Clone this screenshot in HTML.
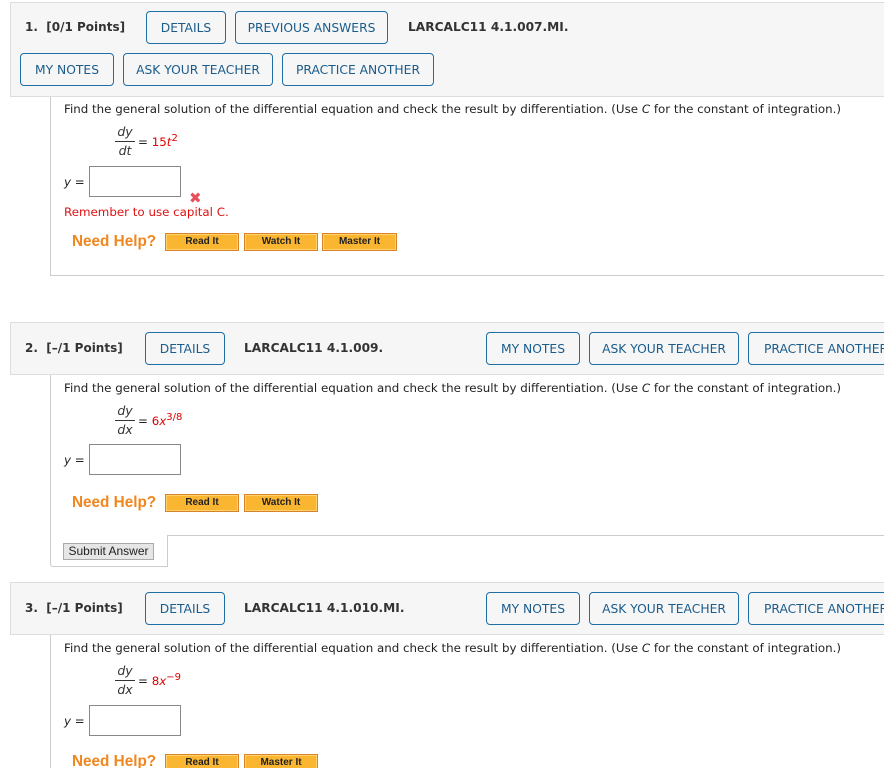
<!DOCTYPE html>
<html><head><style>
html,body{margin:0;width:884px;height:768px;overflow:hidden}
body{background:#fff;font-family:"DejaVu Sans","Liberation Sans",sans-serif;position:relative}
.a{position:absolute;white-space:nowrap}
.hdr{position:absolute;left:10px;width:874px;background:#f6f6f6;border:1px solid #ddd;border-right:none;box-sizing:border-box}
.btn{position:absolute;border:1px solid #1e6fa5;border-radius:4px;color:#1a5c8c;font-size:12.3px;display:flex;align-items:center;justify-content:center;box-sizing:border-box;height:33px;background:#f6f6f6;white-space:nowrap;overflow:hidden}
.pts{font-size:12px;font-weight:bold;color:#333}
.code{font-size:12.2px;font-weight:bold;color:#333}
.txt{font-size:11.85px;color:#222}
.frac{position:absolute;font-size:12.5px;font-style:italic;color:#333;text-align:center;width:20px}
.red{color:#d00}
.inp{position:absolute;width:92px;height:31px;border:1px solid #888;box-sizing:border-box;background:#fff}
.nh{font-family:"Liberation Sans",sans-serif;font-size:15.3px;font-weight:bold;color:#f0861e}
.hb{position:absolute;height:18px;background:#fbb631;border:1px solid #d9822b;box-shadow:inset 0 0 0 1px #ffd36b;box-sizing:border-box;font-family:"Liberation Sans",sans-serif;font-size:10px;font-weight:bold;color:#222;text-align:center;line-height:16px}
.box{position:absolute;border-left:1px solid #ccc;border-bottom:1px solid #ccc;box-sizing:border-box}
sup{font-size:10px}
</style></head><body>

<!-- Q1 -->
<div class="box" style="left:50px;top:96px;width:834px;height:180px"></div>
<div class="hdr" style="top:2px;height:95px"></div>
<div class="a pts" style="left:25px;top:20px">1.&nbsp; [0/1 Points]</div>
<div class="btn" style="left:146px;top:11px;width:80px">DETAILS</div>
<div class="btn" style="left:235px;top:11px;width:153px">PREVIOUS ANSWERS</div>
<div class="a code" style="left:408px;top:20px">LARCALC11 4.1.007.MI.</div>
<div class="btn" style="left:20px;top:53px;width:94px">MY NOTES</div>
<div class="btn" style="left:123px;top:53px;width:150px">ASK YOUR TEACHER</div>
<div class="btn" style="left:282px;top:53px;width:152px">PRACTICE ANOTHER</div>
<div class="a txt" style="left:64px;top:102px">Find the general solution of the differential equation and check the result by differentiation. (Use <i>C</i> for the constant of integration.)</div>
<div class="frac" style="left:115px;top:124px">dy</div>
<div class="a" style="left:115px;top:141px;width:20px;border-top:1px solid #333"></div>
<div class="frac" style="left:115px;top:143px">dt</div>
<div class="a txt" style="left:138px;top:133px">= <span class="red">15<i>t</i><sup>2</sup></span></div>
<div class="a txt" style="left:64px;top:175px"><i>y</i> =</div>
<div class="inp" style="left:89px;top:166px"></div>
<div class="a" style="left:189px;top:189px;color:#e8505b;font-size:15px;font-weight:bold">✖</div>
<div class="a txt red" style="left:64px;top:205px;color:#d11">Remember to use capital C.</div>
<div class="a nh" style="left:72px;top:233px">Need Help?</div>
<div class="hb" style="left:165px;top:233px;width:74px">Read It</div>
<div class="hb" style="left:244px;top:233px;width:74px">Watch It</div>
<div class="hb" style="left:322px;top:233px;width:75px">Master It</div>

<!-- Q2 -->
<div class="box" style="left:50px;top:374px;width:117px;height:193px;border-radius:0 0 0 3px"></div>
<div class="a" style="left:167px;top:535px;height:32px;border-left:1px solid #ccc"></div>
<div class="a" style="left:167px;top:535px;width:717px;border-top:1px solid #ccc"></div>
<div class="hdr" style="top:322px;height:53px"></div>
<div class="a pts" style="left:25px;top:341px">2.&nbsp; [–/1 Points]</div>
<div class="btn" style="left:145px;top:332px;width:80px">DETAILS</div>
<div class="a code" style="left:244px;top:341px">LARCALC11 4.1.009.</div>
<div class="btn" style="left:486px;top:332px;width:94px">MY NOTES</div>
<div class="btn" style="left:589px;top:332px;width:150px">ASK YOUR TEACHER</div>
<div class="btn" style="left:748px;top:332px;width:152px;justify-content:flex-start;padding-left:15px">PRACTICE ANOTHER</div>
<div class="a txt" style="left:64px;top:381px">Find the general solution of the differential equation and check the result by differentiation. (Use <i>C</i> for the constant of integration.)</div>
<div class="frac" style="left:115px;top:403px">dy</div>
<div class="a" style="left:115px;top:420px;width:20px;border-top:1px solid #333"></div>
<div class="frac" style="left:115px;top:422px">dx</div>
<div class="a txt" style="left:138px;top:412px">= <span class="red">6<i>x</i><sup>3/8</sup></span></div>
<div class="a txt" style="left:64px;top:453px"><i>y</i> =</div>
<div class="inp" style="left:89px;top:444px"></div>
<div class="a nh" style="left:72px;top:494px">Need Help?</div>
<div class="hb" style="left:165px;top:494px;width:74px">Read It</div>
<div class="hb" style="left:244px;top:494px;width:74px">Watch It</div>
<div class="a" style="left:63px;top:543px;width:91px;height:17px;background:#e6e6e6;border:1px solid #aaa;box-sizing:border-box;font-family:'Liberation Sans',sans-serif;font-size:12px;color:#222;text-align:center;line-height:15px">Submit Answer</div>

<!-- Q3 -->
<div class="a" style="left:50px;top:634px;height:134px;border-left:1px solid #ccc"></div>
<div class="hdr" style="top:582px;height:53px"></div>
<div class="a pts" style="left:25px;top:601px">3.&nbsp; [–/1 Points]</div>
<div class="btn" style="left:145px;top:592px;width:80px">DETAILS</div>
<div class="a code" style="left:244px;top:601px">LARCALC11 4.1.010.MI.</div>
<div class="btn" style="left:486px;top:592px;width:94px">MY NOTES</div>
<div class="btn" style="left:589px;top:592px;width:150px">ASK YOUR TEACHER</div>
<div class="btn" style="left:748px;top:592px;width:152px;justify-content:flex-start;padding-left:15px">PRACTICE ANOTHER</div>
<div class="a txt" style="left:64px;top:641px">Find the general solution of the differential equation and check the result by differentiation. (Use <i>C</i> for the constant of integration.)</div>
<div class="frac" style="left:115px;top:663px">dy</div>
<div class="a" style="left:115px;top:680px;width:20px;border-top:1px solid #333"></div>
<div class="frac" style="left:115px;top:682px">dx</div>
<div class="a txt" style="left:138px;top:672px">= <span class="red">8<i>x</i><sup>−9</sup></span></div>
<div class="a txt" style="left:64px;top:714px"><i>y</i> =</div>
<div class="inp" style="left:89px;top:705px"></div>
<div class="a nh" style="left:72px;top:753px">Need Help?</div>
<div class="hb" style="left:165px;top:754px;width:74px">Read It</div>
<div class="hb" style="left:244px;top:754px;width:74px">Master It</div>
</body></html>
